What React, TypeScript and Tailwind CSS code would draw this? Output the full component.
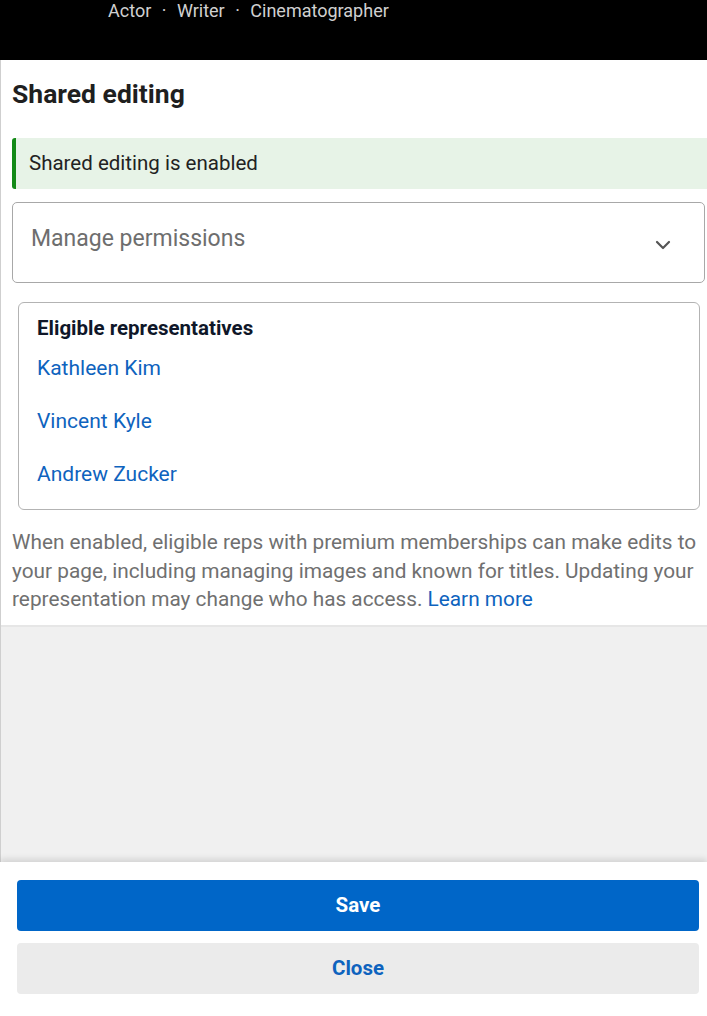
import { ChevronDown } from 'lucide-react';

const reps = ['Kathleen Kim', 'Vincent Kyle', 'Andrew Zucker'];

export default function App() {
  return (
    <div className="flex h-[1016px] w-[707px] flex-col overflow-hidden bg-white font-['Roboto',sans-serif]">
      {/* Profile header (scrolled) */}
      <div className="h-[60px] shrink-0 bg-black pl-[108px]">
        <p className="text-[18px] leading-[22px] text-[#d0d0d0]">
          Actor <span className="mx-[6px]">·</span> Writer <span className="mx-[6px]">·</span> Cinematographer
        </p>
      </div>

      {/* Panel */}
      <div className="flex flex-1 flex-col border-l border-[#cfcfcf]">
        <div className="shrink-0 bg-white pb-[11px] pl-[11px]">
          <h1 className="pt-[18px] text-[26.5px] font-bold leading-[32px] text-[#1f1f1f]">Shared editing</h1>

          <div className="mt-[28px] flex h-[51px] items-center rounded-l-[3px] border-l-4 border-[#138a17] bg-[#e7f3e7] pl-[13px]">
            <span className="text-[20.5px] text-[#222]">Shared editing is enabled</span>
          </div>

          <div className="mt-[13px] mr-[2px] flex h-[81px] items-start justify-between rounded-[5px] border border-[#a8a8a8] pl-[18px] pr-[29px]">
            <span className="pt-[22px] text-[23px] leading-[28px] text-[#6e6e6e]">Manage permissions</span>
            <ChevronDown className="mt-[30px] h-[24px] w-[24px] text-[#555]" strokeWidth={2.2} />
          </div>

          <div className="mx-[6px] mt-[19px] mr-[7px] rounded-[6px] border border-[#b3b3b3] px-[18px] pt-[13px] pb-[21px]">
            <h2 className="text-[20.5px] font-bold leading-[24px] text-[#0f1729]">Eligible representatives</h2>
            <ul className="mt-[14px] flex flex-col gap-[25px]">
              {reps.map((name) => (
                <li key={name}>
                  <a href="#0" className="text-[21px] leading-[28px] text-[#0e63be]">
                    {name}
                  </a>
                </li>
              ))}
            </ul>
          </div>

          <p className="mt-[18px] pr-[2px] text-[20.8px] leading-[28.5px] text-[#707070]">
            When enabled, eligible reps with premium memberships can make edits to your page, including managing images
            and known for titles. Updating your representation may change who has access.{' '}
            <a href="#0" className="text-[#0e63be]">
              Learn more
            </a>
          </p>
        </div>

        <div className="flex-1 border-t-2 border-[#e6e6e6] bg-[#f0f0f0]" />
      </div>

      {/* Footer actions */}
      <div className="relative shrink-0 bg-white pt-[18px] pb-[22px] shadow-[0_-3px_6px_rgba(0,0,0,0.12)]">
        <div className="ml-[17px] flex w-[682px] flex-col gap-[12px]">
          <button className="h-[51px] rounded-[4px] bg-[#0066c8] text-[20.5px] font-bold text-white">Save</button>
          <button className="h-[51px] rounded-[4px] bg-[#ebebeb] text-[20.5px] font-bold text-[#0e63be]">Close</button>
        </div>
      </div>
    </div>
  );
}
